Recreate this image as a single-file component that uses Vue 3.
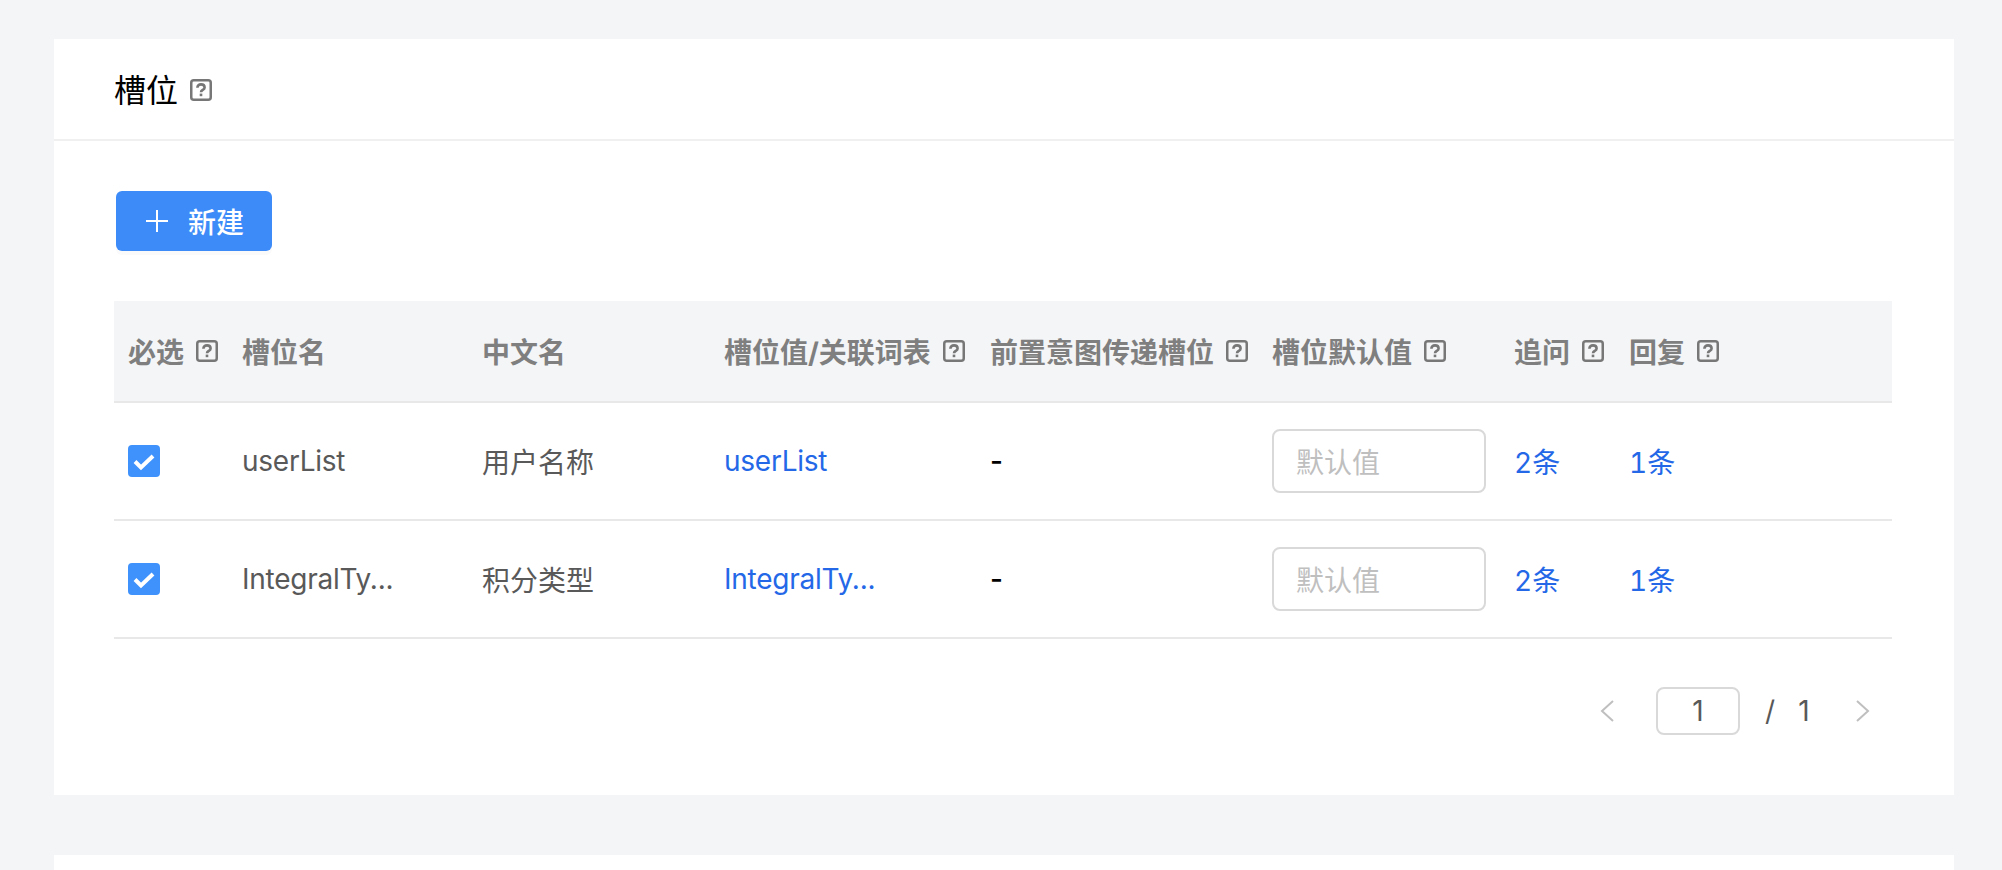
<template>
  <div class="page">
    <section class="card">
      <header class="card__head">
        <h2 class="card__title">槽位</h2>
        <svg class="help help--title" viewBox="0 0 22 22"><use href="#help-icon" /></svg>
      </header>
      <div class="card__body">
        <button class="add-btn">
          <svg class="add-btn__icon" viewBox="0 0 22 22"><path d="M11 0v22M0 11h22" /></svg>
          <span>新建</span>
        </button>
        <table class="slots">
          <colgroup>
            <col v-for="(w, i) in colWidths" :key="i" :style="{ width: w + 'px' }" />
          </colgroup>
          <thead>
            <tr>
              <th v-for="col in columns" :key="col.label">
                <span class="th-inner">
                  {{ col.label }}
                  <svg v-if="col.help" class="help" viewBox="0 0 22 22"><use href="#help-icon" /></svg>
                </span>
              </th>
            </tr>
          </thead>
          <tbody>
            <tr v-for="row in rows" :key="row.name">
              <td>
                <span class="check">
                  <svg viewBox="0 0 32 32"><path d="M7 16.5l6 6L25 11" /></svg>
                </span>
              </td>
              <td class="latin">{{ row.name }}</td>
              <td>{{ row.zh }}</td>
              <td class="latin"><a class="link">{{ row.name }}</a></td>
              <td class="dash">-</td>
              <td><input class="default-input" placeholder="默认值" /></td>
              <td class="count"><a class="link">2条</a></td>
              <td class="count"><a class="link">1条</a></td>
            </tr>
          </tbody>
        </table>
        <div class="pager">
          <svg class="pager__arrow" viewBox="0 0 14 22"><path d="M13 1L2 11l11 10" /></svg>
          <input class="pager__input" value="1" />
          <span class="pager__sep">/</span>
          <span class="pager__total">1</span>
          <svg class="pager__arrow pager__arrow--next" viewBox="0 0 14 22"><path d="M1 1l11 10L1 21" /></svg>
        </div>
      </div>
    </section>
    <section class="card card--next"></section>

    <svg width="0" height="0" class="defs">
      <symbol id="help-icon" viewBox="0 0 22 22">
        <rect x="1.25" y="1.25" width="19.5" height="19.5" rx="2.5" fill="none" stroke="currentColor" stroke-width="2.5" />
        <path d="M7.4 8.8c0-2.2 1.5-3.4 3.6-3.4s3.6 1.2 3.6 3c0 2.5-3.6 2.5-3.6 4.8" fill="none" stroke="currentColor" stroke-width="2.6" />
        <rect x="9.7" y="14.6" width="2.6" height="2.6" fill="currentColor" />
      </symbol>
    </svg>
  </div>
</template>

<script setup>
const colWidths = [114, 240, 242, 266, 282, 242, 115, 277];

const columns = [
  { label: "必选", help: true },
  { label: "槽位名" },
  { label: "中文名" },
  { label: "槽位值/关联词表", help: true },
  { label: "前置意图传递槽位", help: true },
  { label: "槽位默认值", help: true },
  { label: "追问", help: true },
  { label: "回复", help: true },
];

const rows = [
  { name: "userList", zh: "用户名称" },
  { name: "IntegralTy...", zh: "积分类型" },
];
</script>

<style>
html,
body {
  background: #f4f5f7;
}
</style>

<style scoped>
.page {
  height: 870px;
  overflow: hidden;
  padding: 39px 48px 0 54px;
  box-sizing: border-box;
  background: #f4f5f7;
  font-family: Inter, "Noto Sans CJK SC", sans-serif;
  font-size: 28px;
  color: #595959;
}

.defs {
  position: absolute;
}

.card {
  background: #fff;
  height: 756px;
}

.card--next {
  margin-top: 60px;
}

.card__head {
  display: flex;
  align-items: center;
  height: 100px;
  padding-left: 60px;
  border-bottom: 2px solid #f0f0f0;
}

.card__title {
  margin: 0;
  margin-top: -2px;
  font-size: 32px;
  font-weight: 400;
  color: #000;
}

.help {
  width: 22px;
  height: 22px;
  margin-left: 12px;
  color: #777;
  flex: none;
}

.help--title {
  margin-left: 12px;
  margin-top: 2px;
}

.card__body {
  padding: 50px 62px 0 60px;
}

.add-btn {
  display: flex;
  align-items: center;
  height: 60px;
  width: 156px;
  margin-left: 2px;
  padding: 0 0 0 30px;
  border: 0;
  border-radius: 6px;
  background: #3d8bf8;
  color: #fff;
  font: inherit;
  font-weight: 500;
  box-shadow: 0 4px 0 #fafafa;
}

.add-btn__icon {
  width: 22px;
  height: 22px;
  margin-right: 20px;
  fill: none;
  stroke: #fff;
  stroke-width: 2;
}

.slots {
  width: 1778px;
  margin-top: 50px;
  border-collapse: collapse;
  table-layout: fixed;
}

.slots th {
  height: 100px;
  padding: 0 0 0 14px;
  background: #f4f5f7;
  border-bottom: 2px solid #e8e8e8;
  color: #7f7f7f;
  font-weight: 700;
  text-align: left;
  white-space: nowrap;
}

.th-inner {
  display: inline-flex;
  align-items: center;
}

.slots td {
  height: 116px;
  padding: 0 0 0 14px;
  border-bottom: 2px solid #e8e8e8;
  white-space: nowrap;
}

.slots td.latin {
  letter-spacing: -0.25px;
}

.slots td.count {
  font-variant-numeric: tabular-nums;
}

.check {
  display: block;
  width: 32px;
  height: 32px;
  border-radius: 4px;
  background: #3f92fb;
}

.check svg {
  display: block;
  fill: none;
  stroke: #fff;
  stroke-width: 4;
}

.link {
  color: #2468e8;
}

.dash {
  color: #000;
  font-weight: 500;
}

.default-input {
  display: block;
  width: 214px;
  height: 64px;
  padding: 4px 22px 0;
  box-sizing: border-box;
  border: 2px solid #d9d9d9;
  border-radius: 8px;
  background: #fff;
  font: inherit;
  outline: none;
}

.default-input::placeholder {
  color: #bfbfbf;
}

.pager {
  display: flex;
  align-items: center;
  justify-content: flex-end;
  margin-top: 48px;
  padding-right: 22px;
  color: #595959;
}

.pager__arrow {
  width: 14px;
  height: 22px;
  fill: none;
  stroke: #bfbfbf;
  stroke-width: 2;
}

.pager__input {
  width: 84px;
  height: 48px;
  margin-left: 42px;
  box-sizing: border-box;
  border: 2px solid #d9d9d9;
  border-radius: 8px;
  text-align: center;
  font: inherit;
  color: inherit;
  outline: none;
}

.pager__sep {
  width: 14px;
  margin-left: 23px;
  text-align: center;
}

.pager__total {
  width: 20px;
  margin-left: 17px;
  text-align: center;
}

.pager__arrow--next {
  margin-left: 42px;
}
</style>
